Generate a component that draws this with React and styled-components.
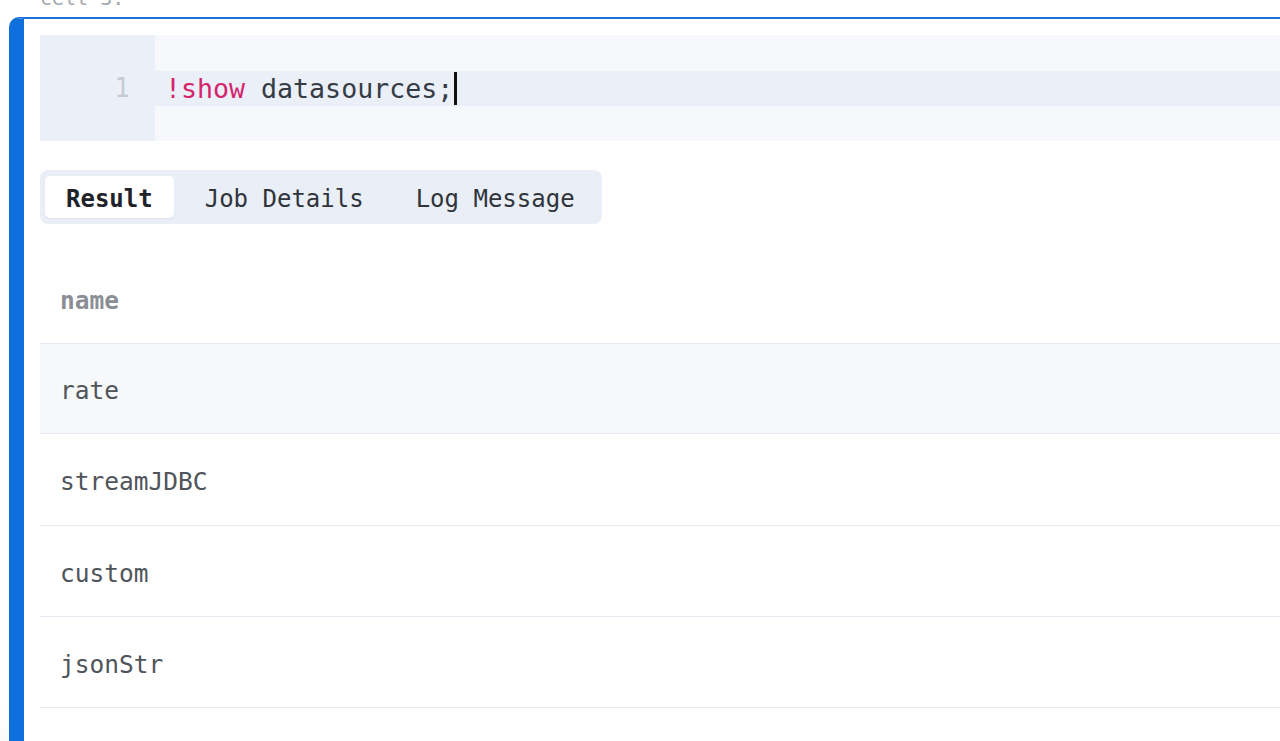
import React from "react";
import styled, { createGlobalStyle } from "styled-components";

const GlobalStyle = createGlobalStyle`
  html, body {
    margin: 0;
    padding: 0;
    background: #ffffff;
    overflow: hidden;
  }
  body {
    font-family: "DejaVu Sans Mono", "Liberation Mono", monospace;
  }
`;

const Page = styled.div`
  width: 1280px;
  height: 741px;
  overflow: hidden;
  background: linear-gradient(to bottom, #ffffff 0, #ffffff 708px, #fafafa 741px);
`;

const CellLabel = styled.div`
  height: 16px;
  margin-top: -12px;
  margin-bottom: 13px;
  padding-left: 40px;
  font-size: 20px;
  line-height: 20px;
  color: #a3a7ae;
`;

const Card = styled.div`
  margin-left: 9px;
  margin-right: -40px;
  border-left: 15px solid #0f6fdc;
  border-top: 2px solid #1a72dc;
  border-top-left-radius: 10px;
  padding: 16px 0 0 16px;
  background: #ffffff;
  height: 800px;
`;

const Editor = styled.div`
  display: flex;
  height: 106px;
  background: #f6f8fb;
`;

const Gutter = styled.div`
  width: 115px;
  background: #ebeff8;
  padding-top: 36px;
  box-sizing: border-box;
`;

const LineNo = styled.div`
  height: 35px;
  line-height: 35px;
  text-align: right;
  padding-right: 25px;
  font-size: 26px;
  color: #c5cbd5;
`;

const Code = styled.div`
  flex: 1;
  padding-top: 36px;
`;

const ActiveLine = styled.div`
  display: flex;
  align-items: center;
  height: 35px;
  padding-left: 10px;
  background: #eaeff8;
  font-size: 26.6px;
  color: #353b45;
  white-space: pre;
`;

const Keyword = styled.span`
  color: #d4246c;
`;

const Caret = styled.span`
  display: inline-block;
  width: 3px;
  height: 33px;
  margin-left: 1px;
  background: #111;
`;

const Tabs = styled.div`
  display: inline-flex;
  gap: 10px;
  margin-top: 29px;
  padding: 6px;
  padding-left: 5px;
  background: #e9eef7;
  border-radius: 8px;
`;

const Tab = styled.div`
  height: 42px;
  line-height: 47px;
  padding: 0 21px;
  border-radius: 5px;
  font-size: 24px;
  font-weight: ${(p) => (p.$active ? 700 : 400)};
  color: ${(p) => (p.$active ? "#1f2228" : "#30343b")};
  background: ${(p) => (p.$active ? "#ffffff" : "transparent")};
  box-shadow: ${(p) => (p.$active ? "0 1px 2px rgba(0,0,0,0.06)" : "none")};
`;

const Table = styled.div`
  margin-top: 29px;
`;

const Row = styled.div`
  display: flex;
  align-items: center;
  box-sizing: border-box;
  height: ${(p) => (p.$h ? p.$h : 90)}px;
  padding-left: 20px;
  padding-top: 4px;
  border-bottom: 1px solid #e5e9f2;
  font-size: 24.5px;
  color: ${(p) => (p.$head ? "#8b8e95" : "#50545b")};
  font-weight: ${(p) => (p.$head ? 700 : 400)};
  background: ${(p) => (p.$striped ? "#f6f8fa" : "#ffffff")};
`;

const rows = [
  { name: "rate", h: 90 },
  { name: "streamJDBC", h: 92 },
  { name: "custom", h: 91 },
  { name: "jsonStr", h: 91 },
];

export default function App() {
  return (
    <Page>
      <GlobalStyle />
      <CellLabel>cell 3:</CellLabel>
      <Card>
        <Editor>
          <Gutter>
            <LineNo>1</LineNo>
          </Gutter>
          <Code>
            <ActiveLine>
              <Keyword>!show</Keyword> datasources;<Caret />
            </ActiveLine>
          </Code>
        </Editor>

        <Tabs>
          <Tab $active>Result</Tab>
          <Tab>Job Details</Tab>
          <Tab>Log Message</Tab>
        </Tabs>

        <Table>
          <Row $head $h={91}>name</Row>
          {rows.map((r, i) => (
            <Row key={r.name} $h={r.h} $striped={i === 0}>
              {r.name}
            </Row>
          ))}
        </Table>
      </Card>
    </Page>
  );
}
